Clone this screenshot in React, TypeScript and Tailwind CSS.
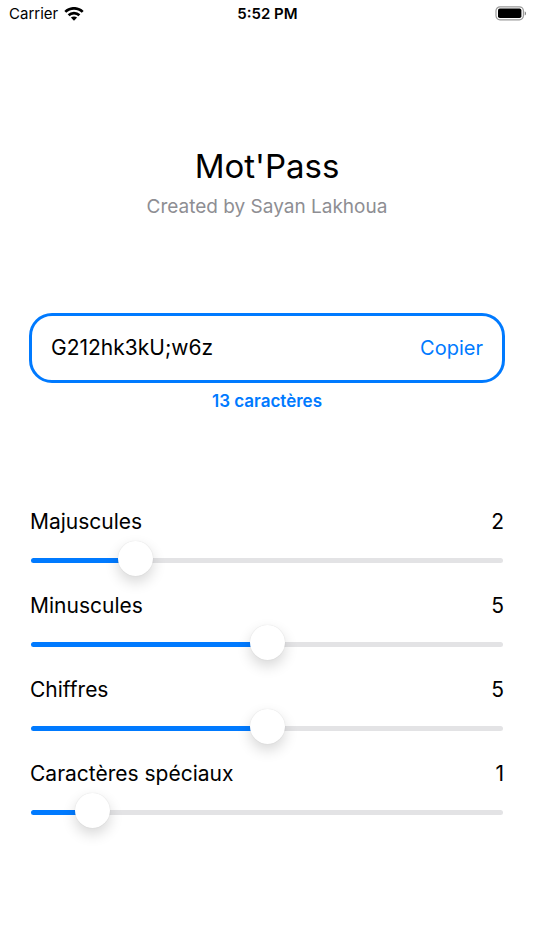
import { useState } from "react";
import type { CSSProperties } from "react";

const MAX = 10;

type SliderRowProps = {
  id: string;
  label: string;
  value: number;
  onChange: (v: number) => void;
};

function StatusBar() {
  return (
    <header className="grid h-7 grid-cols-3 items-center pr-2 pl-[9px] text-[15px] leading-5">
      <div className="flex items-center gap-[6px]">
        <span>Carrier</span>
        <svg width="20" height="15" viewBox="0 0 20 15" fill="none" stroke="#000" strokeWidth="2.7" aria-hidden="true">
          <path d="M1.3 4.9C6.2.1 13.8.1 18.7 4.9" />
          <path d="M4.6 8.3C7.6 5.4 12.4 5.4 15.4 8.3" />
          <path d="M10 13.7 6.9 10.6C8.6 9 11.4 9 13.1 10.6Z" fill="#000" stroke="none" />
        </svg>
      </div>
      <time className="text-center font-semibold">5:52 PM</time>
      <svg className="justify-self-end" width="31" height="16" viewBox="0 0 31 16" aria-hidden="true">
        <rect x="1" y="0.8" width="27.4" height="13" rx="4" fill="none" stroke="#999" strokeWidth="1.2" />
        <rect x="3" y="2.6" width="23.4" height="9.4" rx="1.8" fill="#000" />
        <path d="M29.7 5.2C31.5 5.9 31.5 8.9 29.7 9.6Z" fill="#888" />
      </svg>
    </header>
  );
}

function SliderRow({ id, label, value, onChange }: SliderRowProps) {
  return (
    <div>
      <div className="flex items-center justify-between text-[21px] leading-8">
        <label htmlFor={id}>{label}</label>
        <output htmlFor={id}>{value}</output>
      </div>
      <input
        id={id}
        type="range"
        min={0}
        max={MAX}
        value={value}
        onChange={(e) => onChange(Number(e.target.value))}
        style={{ "--fill": `${(value / MAX) * 100}%` } as CSSProperties}
        className="mt-[2px] block h-10 w-full cursor-pointer appearance-none bg-transparent px-px [&::-webkit-slider-runnable-track]:h-[5px] [&::-webkit-slider-runnable-track]:rounded-full [&::-webkit-slider-runnable-track]:bg-[linear-gradient(to_right,#007aff_var(--fill),#e3e3e5_var(--fill))] [&::-webkit-slider-thumb]:-mt-[17px] [&::-webkit-slider-thumb]:size-[35px] [&::-webkit-slider-thumb]:appearance-none [&::-webkit-slider-thumb]:rounded-full [&::-webkit-slider-thumb]:bg-white [&::-webkit-slider-thumb]:shadow-[0_0_1px_rgba(0,0,0,0.15),0_6px_14px_rgba(0,0,0,0.16)]"
      />
    </div>
  );
}

export default function App() {
  const [password] = useState("G212hk3kU;w6z");
  const [upper, setUpper] = useState(2);
  const [lower, setLower] = useState(5);
  const [digits, setDigits] = useState(5);
  const [special, setSpecial] = useState(1);

  const total = upper + lower + digits + special;

  return (
    <div className="min-h-screen bg-white font-['Inter','Liberation_Sans',sans-serif] text-black">
      <StatusBar />
      <main className="px-[29px] pb-24">
        <div className="pt-28 text-center">
          <h1 className="text-[33px] leading-[53px]">Mot'Pass</h1>
          <p className="text-[19px] leading-7 text-[#8e8e93]">Created by Sayan Lakhoua</p>
        </div>

        <section className="mt-[92px]">
          <div className="flex h-[70px] items-center justify-between rounded-[23px] border-[3px] border-[#007aff] px-[19px]">
            <span className="text-[21px] leading-8">{password}</span>
            <button
              type="button"
              onClick={() => navigator.clipboard?.writeText(password)}
              className="cursor-pointer text-[20px] leading-8 text-[#007aff]"
            >
              Copier
            </button>
          </div>
          <p className="mt-[6px] text-center text-[17px] leading-6 font-semibold text-[#007aff]">
            {total} caractères
          </p>
        </section>

        <section className="mt-[93px] flex flex-col gap-[10px] px-px">
          <SliderRow id="majuscules" label="Majuscules" value={upper} onChange={setUpper} />
          <SliderRow id="minuscules" label="Minuscules" value={lower} onChange={setLower} />
          <SliderRow id="chiffres" label="Chiffres" value={digits} onChange={setDigits} />
          <SliderRow id="speciaux" label="Caractères spéciaux" value={special} onChange={setSpecial} />
        </section>
      </main>
    </div>
  );
}
